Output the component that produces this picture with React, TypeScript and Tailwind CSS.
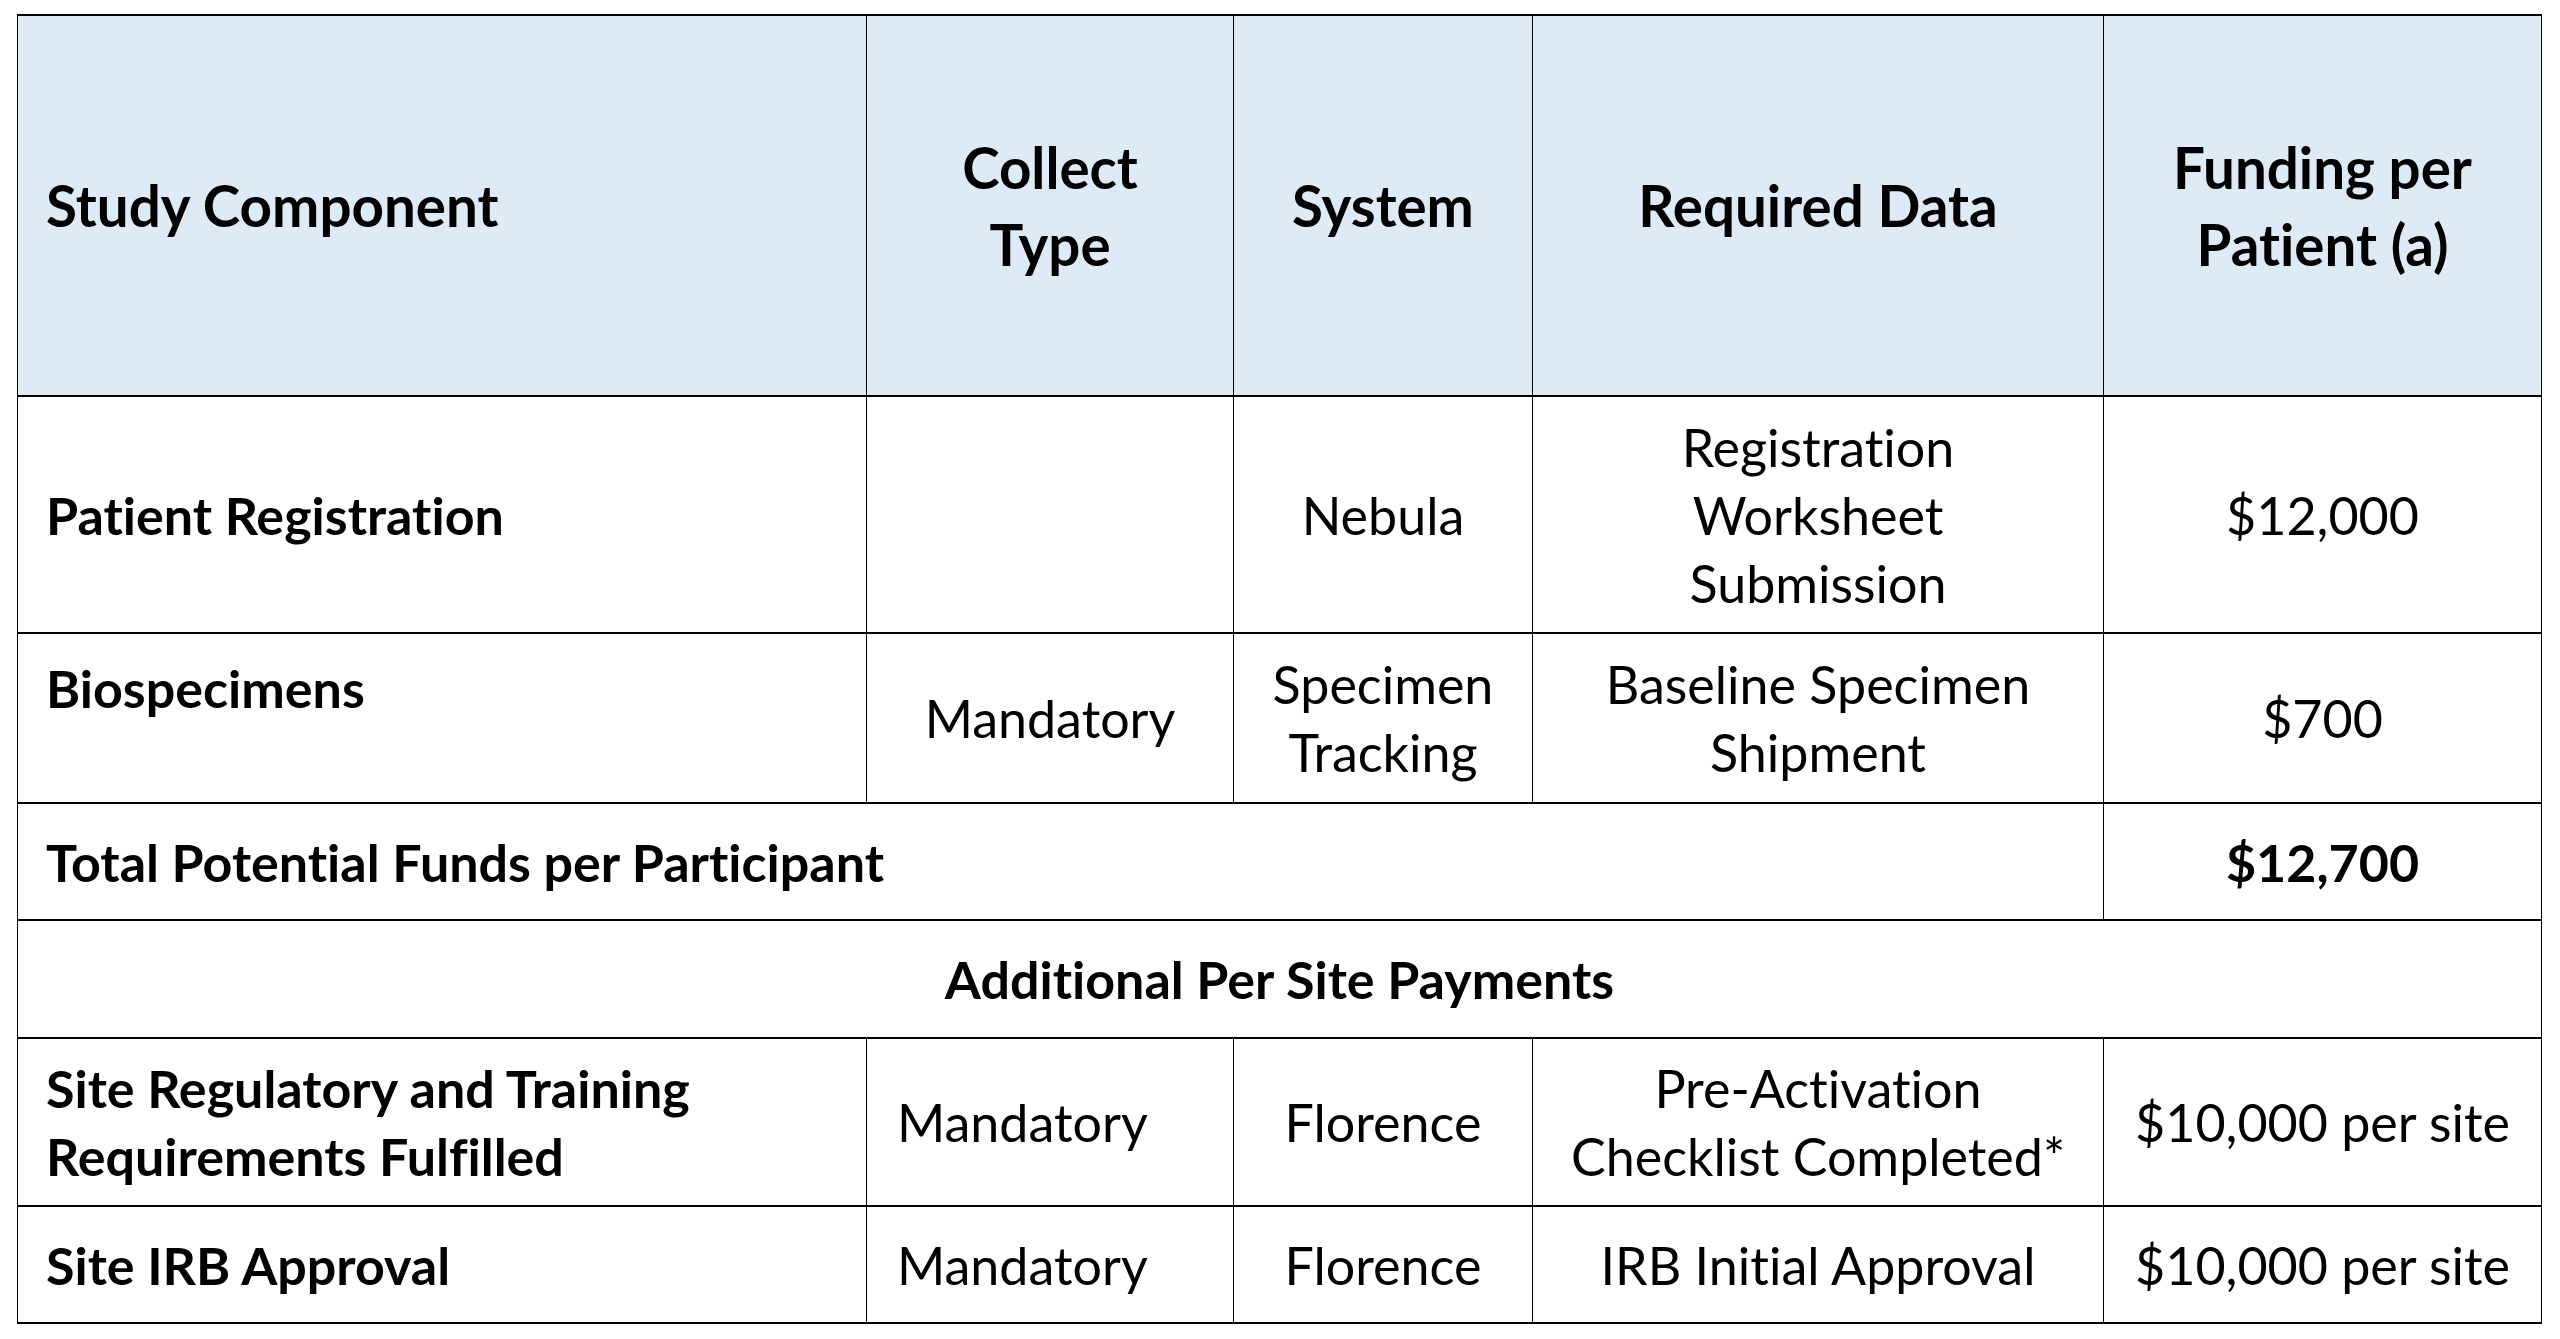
const font = { fontFamily: 'Lato, "Open Sans", sans-serif' };

const cell = 'border-x-[1.5px] border-y-2 border-black';
const head = `${cell} text-center font-bold`;

export default function App() {
  return (
    <div
      className="min-h-screen bg-white pl-[17px] pt-[14px] text-black [font-variant-ligatures:none]"
      style={font}
    >
      <table className="w-[2525px] table-fixed border-collapse text-[52px] leading-[68px]">
        <colgroup>
          <col className="w-[849px]" />
          <col className="w-[367px]" />
          <col className="w-[299px]" />
          <col className="w-[571px]" />
          <col className="w-[438px]" />
        </colgroup>
        <thead>
          <tr className="h-[381px] bg-[#DEEAF6] text-[56.5px] leading-[77px]">
            <th className={`${cell} pl-[28px] text-left font-bold`}>Study Component</th>
            <th className={head}>
              Collect
              <br />
              Type
            </th>
            <th className={head}>System</th>
            <th className={head}>Required Data</th>
            <th className={head}>
              Funding per
              <br />
              Patient (a)
            </th>
          </tr>
        </thead>
        <tbody>
          <tr className="h-[237px]">
            <td className={`${cell} pl-[28px] font-bold`}>Patient Registration</td>
            <td className={cell}></td>
            <td className={`${cell} text-center`}>Nebula</td>
            <td className={`${cell} text-center`}>
              Registration
              <br />
              Worksheet
              <br />
              Submission
            </td>
            <td className={`${cell} text-center`}>$12,000</td>
          </tr>
          <tr className="h-[170px]">
            <td className={`${cell} pl-[28px] pt-[20px] align-top font-bold`}>Biospecimens</td>
            <td className={`${cell} text-center`}>Mandatory</td>
            <td className={`${cell} text-center`}>
              Specimen
              <br />
              Tracking
            </td>
            <td className={`${cell} text-center`}>
              Baseline Specimen
              <br />
              Shipment
            </td>
            <td className={`${cell} text-center`}>$700</td>
          </tr>
          <tr className="h-[117px]">
            <td colSpan={4} className={`${cell} pl-[28px] font-bold`}>
              Total Potential Funds per Participant
            </td>
            <td className={`${cell} text-center font-bold`}>$12,700</td>
          </tr>
          <tr className="h-[118px]">
            <td colSpan={5} className={`${cell} text-center font-bold`}>
              Additional Per Site Payments
            </td>
          </tr>
          <tr className="h-[168px]">
            <td className={`${cell} pl-[28px] font-bold`}>
              Site Regulatory and Training
              <br />
              Requirements Fulfilled
            </td>
            <td className={`${cell} pl-[30px]`}>Mandatory</td>
            <td className={`${cell} text-center`}>Florence</td>
            <td className={`${cell} text-center`}>
              Pre-Activation
              <br />
              Checklist Completed*
            </td>
            <td className={`${cell} text-center`}>$10,000 per site</td>
          </tr>
          <tr className="h-[117px]">
            <td className={`${cell} pl-[28px] font-bold`}>Site IRB Approval</td>
            <td className={`${cell} pl-[30px]`}>Mandatory</td>
            <td className={`${cell} text-center`}>Florence</td>
            <td className={`${cell} text-center`}>IRB Initial Approval</td>
            <td className={`${cell} text-center`}>$10,000 per site</td>
          </tr>
        </tbody>
      </table>
    </div>
  );
}
